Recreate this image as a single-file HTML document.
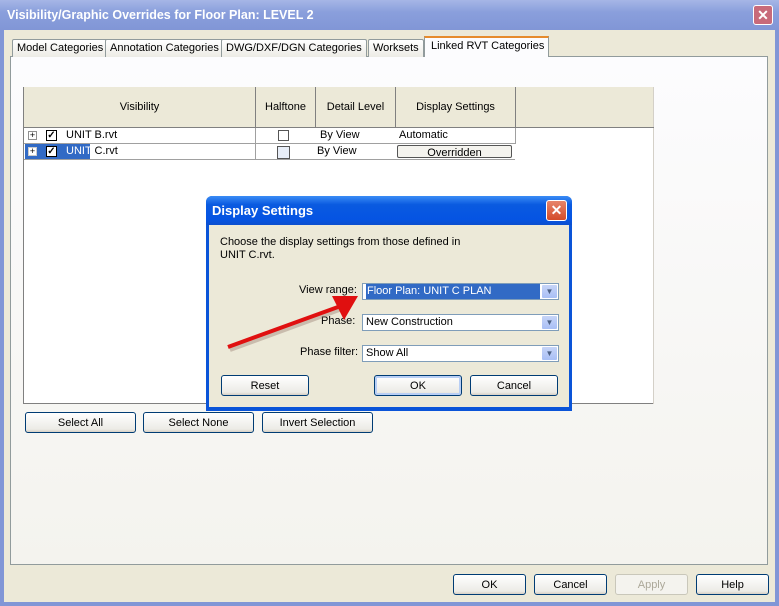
<!DOCTYPE html>
<html><head><meta charset="utf-8"><style>
*{box-sizing:border-box;margin:0;padding:0}
body{width:779px;height:606px;overflow:hidden;font-family:"Liberation Sans",sans-serif;font-size:11px;color:#000;position:relative;background:#ece9d8}
.abs{position:absolute}
.btn{position:absolute;border:1px solid #003c74;border-radius:3px;background:linear-gradient(#fff,#ecebe6 85%,#d6d0c5);text-align:center;font-size:11px;line-height:20px;height:21px}
.tab{position:absolute;top:39px;height:18px;border:1px solid #919b9c;border-bottom:none;background:linear-gradient(#fff,#ecebe5);font-size:11px;line-height:16px;padding:0 4px;border-radius:2px 2px 0 0}
.hd{position:absolute;top:87px;height:41px;background:#ece9d8;border-right:1px solid #808080;text-align:center;line-height:41px}
.cb{position:absolute;width:11px;height:11px;border:1px solid #1c5180;background:#fff}
.sel{position:absolute;height:17px;border:1px solid #7f9db9;background:#fff;line-height:15px;padding-left:3px}
.dd{position:absolute;right:1px;top:1px;width:15px;height:13px;background:linear-gradient(#c6d4f7,#a9bff5);border-radius:1px;color:#4d6185;font-size:8px;text-align:center;line-height:13px}
</style></head><body>
<div class="abs" style="left:0;top:0;width:779px;height:30px;background:linear-gradient(#a6b6e6,#8a9fdc 40%,#8196d6);"></div>
<div class="abs" style="left:7px;top:8px;color:#fff;font-weight:bold;font-size:12.5px">Visibility/Graphic Overrides for Floor Plan: LEVEL 2</div>
<div class="abs" style="left:753px;top:5px;width:20px;height:20px;border:1px solid #fff;border-radius:3px;background:#c86a7a;color:#fff;text-align:center;font-weight:bold;font-size:14px;line-height:18px">✕</div>
<div class="abs" style="left:0;top:30px;width:4px;height:576px;background:#8196d6"></div>
<div class="abs" style="left:775px;top:30px;width:4px;height:576px;background:#8196d6"></div>
<div class="abs" style="left:0;top:602px;width:779px;height:4px;background:#8196d6"></div>
<div class="abs" style="left:10px;top:56px;width:758px;height:509px;border:1px solid #919b9c;background:linear-gradient(#fcfcfe,#f4f3ee)"></div>
<div class="tab" style="left:12px">Model Categories</div>
<div class="tab" style="left:105px">Annotation Categories</div>
<div class="tab" style="left:221px">DWG/DXF/DGN Categories</div>
<div class="tab" style="left:368px">Worksets</div>
<div class="abs" style="left:424px;top:36px;width:125px;height:21px;border:1px solid #919b9c;border-top:2px solid #e68b2c;border-bottom:none;background:#fcfcfe;line-height:16px;padding-left:6px">Linked RVT Categories</div>
<div class="abs" style="left:23px;top:87px;width:631px;height:317px;border:1px solid #808080;border-right:none;background:#fff"></div>
<div class="abs" style="left:653px;top:87px;width:1px;height:317px;background:#d4d0c8"></div>
<div class="hd" style="left:24px;width:232px">Visibility</div>
<div class="hd" style="left:256px;width:60px">Halftone</div>
<div class="hd" style="left:316px;width:80px">Detail Level</div>
<div class="hd" style="left:396px;width:120px">Display Settings</div>
<div class="hd" style="left:516px;width:137px;border-right:none"></div>
<div class="abs" style="left:24px;top:127px;width:630px;height:1px;background:#808080"></div>
<div class="abs" style="left:24px;top:143px;width:491px;height:1px;background:#a0a0a0"></div>
<div class="abs" style="left:24px;top:159px;width:491px;height:1px;background:#a0a0a0"></div>
<div class="abs" style="left:255px;top:128px;width:1px;height:31px;background:#a0a0a0"></div>
<div class="abs" style="left:515px;top:128px;width:1px;height:16px;background:#a0a0a0"></div>
<div class="abs" style="left:28px;top:131px;width:9px;height:9px;border:1px solid #909090;font-size:9px;line-height:7px;text-align:center">+</div>
<div class="cb" style="left:46px;top:130px;border-color:#000;font-size:10px;line-height:9px;text-align:center;font-weight:bold">✓</div>
<div class="abs" style="left:66px;top:129px">UNIT B.rvt</div>
<div class="cb" style="left:278px;top:130px;border-color:#555"></div>
<div class="abs" style="left:320px;top:129px">By View</div>
<div class="abs" style="left:399px;top:129px">Automatic</div>
<div class="abs" style="left:25px;top:144px;width:65px;height:15px;background:#316ac5"></div>
<div class="abs" style="left:28px;top:147px;width:9px;height:9px;border:1px solid #ccc;background:#fff;font-size:9px;line-height:7px;text-align:center">+</div>
<div class="cb" style="left:46px;top:146px;border-color:#000;font-size:10px;line-height:9px;text-align:center;font-weight:bold">✓</div>
<div class="abs" style="left:66px;top:145px;color:#fff">UNIT <span style="color:#000">C.rvt</span></div>
<div class="cb" style="left:277px;top:146px;width:13px;height:13px;border-color:#555;background:#e8eef8"></div>
<div class="abs" style="left:317px;top:145px">By View</div>
<div class="abs" style="left:397px;top:145px;width:115px;height:13px;border:1px solid #555;border-radius:2px;background:#f4f3ee;text-align:center;line-height:14px;overflow:hidden">Overridden</div>
<div class="btn" style="left:25px;top:412px;width:111px">Select All</div>
<div class="btn" style="left:143px;top:412px;width:111px">Select None</div>
<div class="btn" style="left:262px;top:412px;width:111px">Invert Selection</div>
<div class="btn" style="left:453px;top:574px;width:73px">OK</div>
<div class="btn" style="left:534px;top:574px;width:73px">Cancel</div>
<div class="btn" style="left:615px;top:574px;width:73px;border-color:#c9c7ba;color:#aca899;background:#f4f3ee">Apply</div>
<div class="btn" style="left:696px;top:574px;width:73px">Help</div>
<div class="abs" style="left:206px;top:196px;width:366px;height:215px;background:#0a54d8;border-radius:6px 6px 0 0"></div>
<div class="abs" style="left:206px;top:196px;width:366px;height:29px;border-radius:6px 6px 0 0;background:linear-gradient(#3a8cf5,#0a5ae0 30%,#0554e3 80%,#0b4fce)"></div>
<div class="abs" style="left:212px;top:203px;color:#fff;font-weight:bold;font-size:13px">Display Settings</div>
<div class="abs" style="left:546px;top:200px;width:21px;height:21px;border:1px solid #fff;border-radius:3px;background:linear-gradient(#e7846a,#d44b2a);color:#fff;text-align:center;font-weight:bold;font-size:14px;line-height:19px">✕</div>
<div class="abs" style="left:209px;top:225px;width:360px;height:182px;background:#ece9d8"></div>
<div class="abs" style="left:220px;top:236px;line-height:13px">Choose the display settings from those defined in<br>UNIT C.rvt.</div>
<div class="abs" style="left:299px;top:284px">View range:</div>
<div class="abs" style="left:321px;top:315px">Phase:</div>
<div class="abs" style="left:300px;top:346px">Phase filter:</div>
<div class="sel" style="left:362px;top:283px;width:197px"><span style="background:#316ac5;color:#fff;display:inline-block;width:174px;padding-left:1px">Floor Plan: UNIT C PLAN</span><div class="dd">▼</div></div>
<div class="sel" style="left:362px;top:314px;width:197px">New Construction<div class="dd">▼</div></div>
<div class="sel" style="left:362px;top:345px;width:197px">Show All<div class="dd">▼</div></div>
<div class="btn" style="left:221px;top:375px;width:88px">Reset</div>
<div class="btn" style="left:374px;top:375px;width:88px;box-shadow:inset 0 0 0 2px #b9cff5">OK</div>
<div class="btn" style="left:470px;top:375px;width:88px">Cancel</div>
<svg class="abs" style="left:220px;top:290px" width="145" height="65">
<line x1="8" y1="57" x2="120" y2="16" stroke="#8a6a60" stroke-width="4" opacity="0.35" transform="translate(2,3)"/>
<line x1="8" y1="57" x2="118" y2="17" stroke="#e01010" stroke-width="4"/>
<polygon points="138,6 112,6 124,30" fill="#e01010"/>
</svg>
</body></html>
